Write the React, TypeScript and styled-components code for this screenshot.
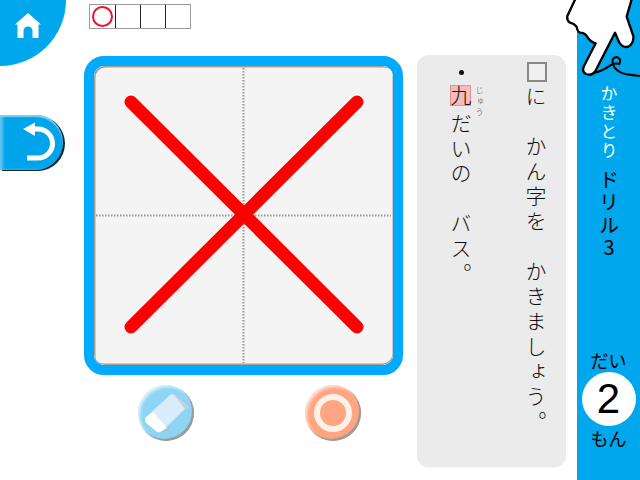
import React from "react";
import styled, { createGlobalStyle } from "styled-components";

const Global = createGlobalStyle`
  html, body { margin: 0; padding: 0; background: #fff; }
  body { font-family: "Noto Sans CJK JP", "Liberation Sans", sans-serif; }
`;

const Screen = styled.div`
  position: relative;
  display: flex;
  width: 640px;
  height: 480px;
  overflow: hidden;
  background: #fff;
`;

const LeftRail = styled.div`
  flex: 0 0 84px;
  display: flex;
  flex-direction: column;
  align-items: flex-start;
`;

const HomeButton = styled.button`
  width: 66px;
  height: 66px;
  padding: 0 10px 14px 0;
  border: 0;
  background: #00a7ec;
  border-bottom-right-radius: 66px;
  display: flex;
  align-items: center;
  justify-content: center;
`;

const BackButton = styled.button`
  margin-top: 49px;
  width: 63px;
  height: 55px;
  padding: 0 0 0 20px;
  border: 0;
  background: #00a4ea;
  border-radius: 0 28px 28px 0;
  box-shadow: 2px 1px 0 #0b2430, inset 0 2px 1px #7fd0f3, inset 3px 0 3px #5cc4f0;
  display: flex;
  align-items: center;
`;

const WorkColumn = styled.div`
  flex: 0 0 319px;
  display: flex;
  flex-direction: column;
`;

const AnswerStrip = styled.div`
  display: flex;
  align-self: flex-start;
  margin: 4px 0 0 5px;
  height: 25px;
  border: 1px solid #9c9c9c;
  box-sizing: border-box;
`;

const AnswerCell = styled.div`
  width: 25px;
  height: 23px;
  box-sizing: border-box;
  display: flex;
  align-items: center;
  justify-content: center;
  & + & { border-left: 1px solid #222; }
`;

const AnswerMark = styled.div`
  width: 21px;
  height: 21px;
  box-sizing: border-box;
  border: 2px solid #f0102c;
  border-radius: 50%;
`;

const Board = styled.div`
  margin-top: 27px;
  width: 319px;
  height: 319px;
  box-sizing: border-box;
  border: 10px solid #00aaff;
  border-radius: 20px;
  overflow: hidden;
  background: #f4f4f4;
`;

const BoardInner = styled.div`
  width: 299px;
  height: 299px;
  border-radius: 10px;
  box-shadow: inset 1.5px 1.5px 0 #a89f98, inset -0.5px -1.5px 0 #a89f98;
  background: #f4f4f4;
`;

const ToolRow = styled.div`
  display: flex;
  gap: 111px;
  margin: 10px 0 0 54px;
`;

const ToolButton = styled.button<{ $bg: string }>`
  width: 56px;
  height: 56px;
  padding: 0;
  border: 0;
  border-radius: 50%;
  background: ${(p) => p.$bg};
  box-shadow: inset -2px -2px 1px #9a9a9a, inset 2px 2px 3px #ffffffb0;
  display: flex;
  align-items: center;
  justify-content: center;
`;

const RingMark = styled.div`
  width: 38px;
  height: 38px;
  box-sizing: border-box;
  border: 6px solid #fff0e8;
  border-radius: 50%;
`;

const PromptPanel = styled.div`
  flex: 0 0 149px;
  margin: 55px 11px 13px 14px;
  box-sizing: border-box;
  border-radius: 12px;
  background: #ebebeb;
  display: flex;
  flex-direction: row-reverse;
  gap: 51px;
  padding: 7px 18px 0 0;
  box-shadow: 0 1px 1px #f4f4f4;
`;

const PromptColumn = styled.div`
  width: 24px;
  writing-mode: vertical-rl;
  font-size: 21px;
  line-height: 24px;
  font-weight: 300;
  letter-spacing: 4px;
  color: #111;
  white-space: pre;
`;

const BlankBox = styled.span`
  display: inline-block;
  width: 20px;
  height: 20px;
  box-sizing: border-box;
  border: 2px solid #8a8a8a;
  background: #f0f0f0;
  margin-left: 1px;
  margin-bottom: 4px;
`;

const Bullet = styled.span`
  display: inline-block;
  width: 5px;
  height: 5px;
  border-radius: 50%;
  background: #111;
  margin: 8px 0 10px 0;
`;

const Highlight = styled.span`
  position: relative;
  display: inline-block;
  width: 21px;
  height: 21px;
  line-height: 21px;
  letter-spacing: 0;
  box-sizing: border-box;
  background: #f4bcbc;
  box-shadow: 0 0 0 1px #ee8e8e inset;
  margin-bottom: 7px;
  text-align: center;
`;

const Furigana = styled.span`
  position: absolute;
  top: 1px;
  right: -13px;
  font-size: 8px;
  line-height: 10px;
  letter-spacing: 3px;
  color: #555;
`;

const SideBar = styled.div`
  flex: 0 0 63px;
  background: #00a7ec;
  display: flex;
  flex-direction: column;
  align-items: center;
  padding-top: 85px;
  box-sizing: border-box;
`;

const SideTitle = styled.div`
  writing-mode: vertical-rl;
  text-orientation: upright;
  line-height: 24px;
  height: 178px;
  color: #000;
  white-space: pre;
`;

const SideTitleAccent = styled.span`
  color: #fff;
  font-size: 17px;
  letter-spacing: 2px;
`;

const SideTitleDrill = styled.span`
  display: inline-block;
  font-size: 20px;
  letter-spacing: 2.5px;
  margin-top: 9px;
  margin-left: -3px;
`;

const SideLabel = styled.div`
  font-size: 18px;
  line-height: 20px;
  color: #000;
`;

const NumberBadge = styled.div`
  width: 54px;
  height: 54px;
  margin: 2px 0;
  border-radius: 50%;
  background: #fff;
  color: #000;
  font-family: "Liberation Sans", sans-serif;
  font-size: 42px;
  line-height: 54px;
  text-align: center;
`;

const Label = styled(SideLabel)`
  margin-top: 87px;
`;

const HandOverlay = styled.svg`
  position: absolute;
  left: 560px;
  top: 0;
`;

const HomeIcon = () => (
  <svg width="26" height="28" viewBox="0 0 26 28">
    <path
      fill="#fff"
      d="M13 1 L26 12.500 L23.500 12.500 L23.500 26 L17.500 26 L17.500 19 A4.500 4.500 0 0 0 8.500 19 L8.500 26 L2.500 26 L2.500 12.500 L0 12.500 Z"
    />
  </svg>
);

const BackIcon = () => (
  <svg width="36" height="42" viewBox="0 0 36 42">
    <path d="M3 7 L15 0.500 L15 14 Z" fill="#fff" />
    <path
      d="M13 7 H18 A14.500 14.500 0 0 1 18 36 H7"
      fill="none"
      stroke="#fff"
      strokeWidth="5"
    />
  </svg>
);

const EraserIcon = () => (
  <svg width="46" height="46" viewBox="0 0 46 46">
    <path d="M30 3 L47 18 L38 19 Z" fill="#c4d2da" />
    <path d="M19 43 L28 38 L22 36 Z" fill="#b4c0c8" />
    <path
      d="M2 28 L27 5 Q29 3 31 5 L42 19 L19 41 L6 34 Z"
      fill="#d8ecfb"
    />
    <path
      d="M3 27 L10 22 L24 38 L17 42 Q15 43 13 41 L3 33 Q1 30 3 27 Z"
      fill="#fff"
    />
  </svg>
);

export default function App() {
  return (
    <Screen>
      <Global />
      <LeftRail>
        <HomeButton aria-label="home">
          <HomeIcon />
        </HomeButton>
        <BackButton aria-label="back">
          <BackIcon />
        </BackButton>
      </LeftRail>

      <WorkColumn>
        <AnswerStrip>
          <AnswerCell>
            <AnswerMark />
          </AnswerCell>
          <AnswerCell />
          <AnswerCell />
          <AnswerCell />
        </AnswerStrip>
        <Board>
          <BoardInner>
            <svg width="299" height="299" viewBox="0 0 299 299">
              <path d="M149.500 2V297" stroke="#999" strokeWidth="2" strokeDasharray="1.5 1.5" />
              <path d="M2 149.500H297" stroke="#999" strokeWidth="2" strokeDasharray="1.5 1.5" />
              <path
                d="M37 36L263 261M263 36L37 261"
                stroke="#ff0000"
                strokeWidth="13"
                strokeLinecap="round"
              />
            </svg>
          </BoardInner>
        </Board>
        <ToolRow>
          <ToolButton $bg="#8dd5f3" aria-label="eraser">
            <EraserIcon />
          </ToolButton>
          <ToolButton $bg="#ffa582" aria-label="pen">
            <RingMark />
          </ToolButton>
        </ToolRow>
      </WorkColumn>

      <PromptPanel>
        <PromptColumn>
          <BlankBox />
          {"に　かん字を　かきましょう。"}
        </PromptColumn>
        <PromptColumn>
          <Bullet />
          <Highlight>
            九<Furigana>じゅう</Furigana>
          </Highlight>
          {"だいの　バス。"}
        </PromptColumn>
      </PromptPanel>

      <SideBar>
        <SideTitle>
          <SideTitleAccent>かきとり</SideTitleAccent>
          <SideTitleDrill>ドリル3</SideTitleDrill>
        </SideTitle>
        <Label>だい</Label>
        <NumberBadge>2</NumberBadge>
        <SideLabel>もん</SideLabel>
      </SideBar>

      <HandOverlay width="80" height="85" viewBox="0 0 240 255">
        <path
          d="M47 -5 L22 48 Q20 62 30 68 Q42 70 50 80 Q52 95 60 98 Q75 98 83 112 Q90 125 107 130 L72 198 Q64 215 78 222 Q95 228 105 215 L165 98 L178 128 Q190 145 205 140 Q222 130 220 108 L200 50 L216 -5 Z"
          fill="#fff"
          stroke="#000"
          strokeWidth="7"
          strokeLinejoin="round"
        />
        <path
          d="M105 218 Q130 212 150 197 Q163 187 178 192 Q185 175 170 171 Q155 172 158 190 Q165 215 195 222 Q220 226 242 228"
          fill="none"
          stroke="#000"
          strokeWidth="6"
        />
      </HandOverlay>
    </Screen>
  );
}
